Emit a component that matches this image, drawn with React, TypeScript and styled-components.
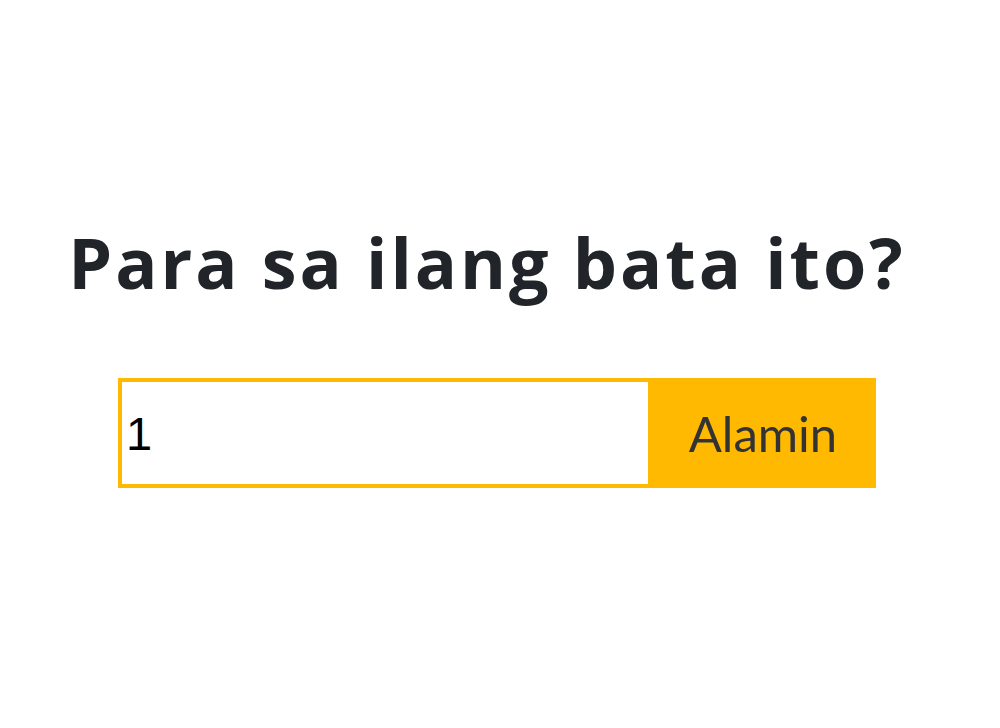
import React from "react";
import styled, { createGlobalStyle } from "styled-components";

const Global = createGlobalStyle`
  html, body { margin: 0; padding: 0; background: #fff; }
  body { width: 1000px; height: 728px; overflow: hidden; }
`;

const Page = styled.main`
  display: flex;
  flex-direction: column;
  align-items: center;
  padding-top: 218px;
  box-sizing: border-box;
  width: 1000px;
  height: 728px;
`;

const Title = styled.h1`
  margin: 0 26px 0 0;
  font-family: "Open Sans", "DejaVu Sans", sans-serif;
  font-weight: 700;
  font-size: 70px;
  line-height: 88px;
  color: #212529;
  letter-spacing: 3px;
`;

const Form = styled.form`
  display: flex;
  margin: 72px 6px 0 0;
  width: 758px;
  height: 110px;
`;

const Input = styled.input`
  flex: 1;
  min-width: 0;
  box-sizing: border-box;
  height: 110px;
  border: 4px solid #ffb900;
  border-right: none;
  padding: 0 0 0 4px;
  margin: 0;
  font-family: "Liberation Sans", Arial, sans-serif;
  font-size: 47px;
  color: #000;
  outline: none;
  background: #fff;
`;

const Button = styled.button`
  width: 228px;
  height: 110px;
  margin: 0;
  border: none;
  background: #ffb900;
  font-family: Lato, sans-serif;
  font-size: 49px;
  color: #333;
  padding: 0 0 0 2px;
  cursor: pointer;
`;

export default function App() {
  return (
    <>
      <Global />
      <Page>
        <Title>Para sa ilang bata ito?</Title>
        <Form onSubmit={(e) => e.preventDefault()}>
          <Input defaultValue="1" />
          <Button type="submit">Alamin</Button>
        </Form>
      </Page>
    </>
  );
}
